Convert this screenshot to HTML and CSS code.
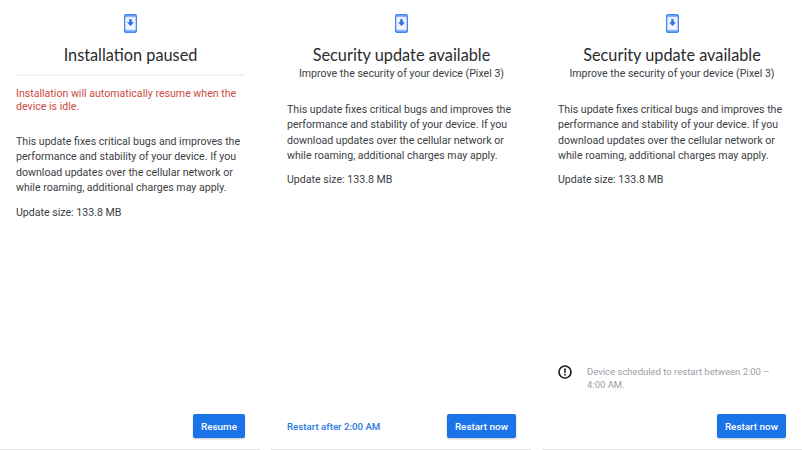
FILE: index.html
```html
<!DOCTYPE html>
<html lang="en">
<head>
<meta charset="utf-8">
<title>System update</title>
<link rel="stylesheet" href="styles.css">
</head>
<body>
<main class="screens">
  <section class="panel">
    <svg class="phone" viewBox="0 0 13 19" aria-hidden="true"><rect x="0.7" y="0.7" width="11.6" height="17.6" rx="1.4" fill="#8fb4f6" stroke="#4285f4" stroke-width="1.4"/><rect x="1.4" y="3.2" width="10.2" height="12.6" fill="#eef4fe"/><path d="M5.2 5.2h2.6v3H10L6.5 12 3 8.2h2.2z" fill="#2f6fde"/></svg>
    <h1 class="title">Installation paused</h1>
    <hr class="rule">
    <p class="warning">Installation will automatically resume when the device is idle.</p>
    <p class="body-text">This update fixes critical bugs and improves the performance and stability of your device. If you download updates over the cellular network or while roaming, additional charges may apply.</p>
    <p class="size">Update size: 133.8 MB</p>
    <div class="actions"><button class="primary">Resume</button></div>
  </section>
  <section class="panel">
    <svg class="phone" viewBox="0 0 13 19" aria-hidden="true"><rect x="0.7" y="0.7" width="11.6" height="17.6" rx="1.4" fill="#8fb4f6" stroke="#4285f4" stroke-width="1.4"/><rect x="1.4" y="3.2" width="10.2" height="12.6" fill="#eef4fe"/><path d="M5.2 5.2h2.6v3H10L6.5 12 3 8.2h2.2z" fill="#2f6fde"/></svg>
    <h1 class="title">Security update available</h1>
    <p class="subtitle">Improve the security of your device (Pixel 3)</p>
    <p class="body-text">This update fixes critical bugs and improves the performance and stability of your device. If you download updates over the cellular network or while roaming, additional charges may apply.</p>
    <p class="size">Update size: 133.8 MB</p>
    <div class="actions split"><a class="link">Restart after 2:00 AM</a><button class="primary">Restart now</button></div>
  </section>
  <section class="panel">
    <svg class="phone" viewBox="0 0 13 19" aria-hidden="true"><rect x="0.7" y="0.7" width="11.6" height="17.6" rx="1.4" fill="#8fb4f6" stroke="#4285f4" stroke-width="1.4"/><rect x="1.4" y="3.2" width="10.2" height="12.6" fill="#eef4fe"/><path d="M5.2 5.2h2.6v3H10L6.5 12 3 8.2h2.2z" fill="#2f6fde"/></svg>
    <h1 class="title">Security update available</h1>
    <p class="subtitle">Improve the security of your device (Pixel 3)</p>
    <p class="body-text">This update fixes critical bugs and improves the performance and stability of your device. If you download updates over the cellular network or while roaming, additional charges may apply.</p>
    <p class="size">Update size: 133.8 MB</p>
    <div class="notice">
      <svg class="alert" viewBox="0 0 14 14" aria-hidden="true"><circle cx="7" cy="7" r="6" fill="none" stroke="#202124" stroke-width="1.7"/><rect x="6.2" y="3.4" width="1.6" height="4.4" fill="#202124"/><rect x="6.2" y="8.9" width="1.6" height="1.7" fill="#202124"/></svg>
      <p class="notice-text">Device scheduled to restart between 2:00 – 4:00 AM.</p>
    </div>
    <div class="actions notice-actions"><button class="primary">Restart now</button></div>
  </section>
</main>
</body>
</html>
```
FILE: styles.css
```css
* { box-sizing: border-box; }
html, body { margin: 0; height: 100%; background: #fff; overflow: hidden; }
body { font-family: Roboto, "Liberation Sans", sans-serif; color: #3c4043; }
.screens { display: flex; gap: 11px; width: 802px; height: 450px; }
.panel {
  flex: 0 0 260px; height: 450px; display: flex; flex-direction: column;
  padding: 14px 15px 11px 16px; border-bottom: 1px solid #e4e4e4;
}
.panel:last-child { padding-right: 16px; }
.phone { width: 13px; height: 19px; display: block; margin: 0 auto; flex: none; }
.title { margin: 11px 0 0; font-family: Lato, Roboto, sans-serif; font-size: 16.3px; line-height: 22px; font-weight: 400; text-align: center; color: #2a2b2e; }
.subtitle { margin: 1px 0 0; font-size: 10.6px; line-height: 14px; text-align: center; color: #3c4043; }
.rule { width: 100%; margin: 8px 0 0; border: 0; height: 2px; background: #f3f3f3; flex: none; }
.warning { margin: 11px 0 0; font-size: 10.6px; line-height: 13px; color: #cc4a40; }
.body-text { margin: 21px 0 0; font-size: 10.6px; line-height: 15.3px; }
.size { margin: 9px 0 0; font-size: 10.6px; line-height: 15px; }
.warning ~ .size { margin-top: 10px; }
.actions { margin-top: auto; display: flex; justify-content: flex-end; align-items: center; }
.split { justify-content: space-between; }
.primary {
  height: 24px; padding: 0 8px; border: 0; border-radius: 2px; background: #1a73e8; color: #fff;
  font: 500 9.9px Roboto, sans-serif; box-shadow: 0 1px 2px rgba(60,64,67,.3);
}
.link { color: #2a77e0; font-size: 9.7px; font-weight: 500; }
.notice { margin-top: auto; display: flex; gap: 15px; align-items: flex-start; }
.alert { width: 14px; height: 14px; flex: none; }
.notice-text { margin: 0; font-size: 9.5px; line-height: 13px; color: #9aa0a6; }
.notice-actions { margin-top: 23px; }
```
